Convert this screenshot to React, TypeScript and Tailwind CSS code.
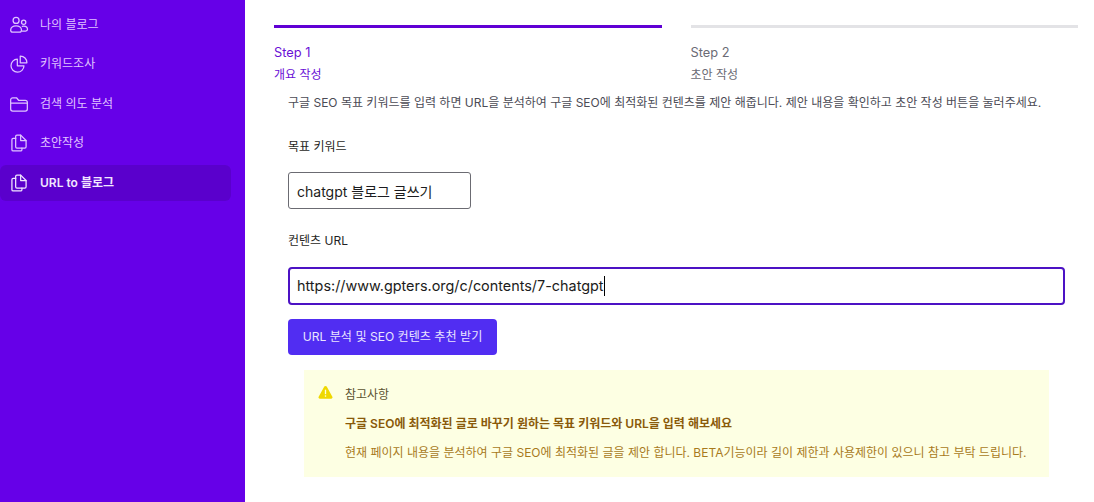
import { useState } from "react";

const font = "font-['Inter','Noto_Sans_CJK_KR',sans-serif]";

const UsersIcon = () => (
  <svg viewBox="0 0 24 24" fill="none" stroke="currentColor" strokeWidth="1.5" strokeLinecap="round" strokeLinejoin="round" className="h-5 w-5">
    <circle cx="8.500" cy="6.500" r="3.600" />
    <circle cx="17.600" cy="8.600" r="2.600" />
    <path d="M2 18.200c0-3 2.900-5.200 6.500-5.200s6.500 2.200 6.500 5.200c0 1.400-1 2.300-2.600 2.300H4.600C3 20.500 2 19.600 2 18.200Z" />
    <path d="M16 13.600c.5-.1 1-.2 1.600-.2 2.600 0 4.600 1.600 4.600 3.800 0 1.300-.9 2.100-2.300 2.100h-4" />
  </svg>
);

const PieIcon = () => (
  <svg viewBox="0 0 24 24" fill="none" stroke="currentColor" strokeWidth="1.5" strokeLinecap="round" strokeLinejoin="round" className="h-5 w-5">
    <path d="M10 6.200a7.800 7.800 0 1 0 8 8h-8v-8Z" />
    <path d="M13.500 2.500a7.800 7.800 0 0 1 8 8h-8v-8Z" />
  </svg>
);

const FolderIcon = () => (
  <svg viewBox="0 0 24 24" fill="none" stroke="currentColor" strokeWidth="1.5" strokeLinecap="round" strokeLinejoin="round" className="h-5 w-5">
    <path d="M2 7a2.500 2.500 0 0 1 2.500-2.500H9l2.500 3h8A2.500 2.500 0 0 1 22 10v8a2.500 2.500 0 0 1-2.500 2.500h-15A2.500 2.500 0 0 1 2 18V7Z" />
    <path d="M2 11h20" />
  </svg>
);

const DocsIcon = () => (
  <svg viewBox="0 0 24 24" fill="none" stroke="currentColor" strokeWidth="1.5" strokeLinecap="round" strokeLinejoin="round" className="h-5 w-5">
    <path d="M8 6.500H5a1.500 1.500 0 0 0-1.500 1.500v12A1.500 1.500 0 0 0 5 21.500h9a1.500 1.500 0 0 0 1.500-1.500v-2" />
    <path d="M8 4a1.500 1.500 0 0 1 1.500-1.500H14l6.500 6.500v7.500A1.500 1.500 0 0 1 19 18H9.500A1.500 1.500 0 0 1 8 16.500V4Z" />
    <path d="M14 2.500V9h6.500" />
  </svg>
);

const navItems = [
  { label: "나의 블로그", icon: <UsersIcon /> },
  { label: "키워드조사", icon: <PieIcon /> },
  { label: "검색 의도 분석", icon: <FolderIcon /> },
  { label: "초안작성", icon: <DocsIcon /> },
  { label: "URL to 블로그", icon: <DocsIcon />, active: true },
];

const Sidebar = () => (
  <aside className="flex w-[245px] shrink-0 flex-col gap-[3.500px] bg-[#6600e8] pt-[6.750px] pr-[14px]">
    {navItems.map((item) => (
      <div
        key={item.label}
        className={`flex h-9 items-center gap-[11px] rounded-md pl-[9px] text-[12px] ${
          item.active ? "bg-[#5a00cc] font-semibold text-[#f1e6ff]" : "font-normal text-[#e0c4ff]"
        }`}
      >
        {item.icon}
        <span>{item.label}</span>
      </div>
    ))}
  </aside>
);

const Step = ({ title, text, active }: { title: string; text: string; active?: boolean }) => (
  <div className={`flex-1 border-t-[3px] pt-[16px] ${active ? "border-[#6000d4] text-[#6a0fd6]" : "border-[#e3e3e6] text-[#6b6b75]"}`}>
    <p className="h-[18px] text-[12.800px] leading-[18px]">{title}</p>
    <p className="mt-[4px] h-[18px] text-[12px] leading-[18px]">{text}</p>
  </div>
);

export default function App() {
  const [keyword, setKeyword] = useState("chatgpt 블로그 글쓰기");
  const [url, setUrl] = useState("https://www.gpters.org/c/contents/7-chatgpt");

  return (
    <div className={`flex h-[502px] w-[1094px] overflow-hidden bg-white ${font}`}>
      <Sidebar />
      <main className="flex-1 pt-[25px] pr-[16px] pl-[29px]">
        <div className="flex gap-[29px]">
          <Step title="Step 1" text="개요 작성" active />
          <Step title="Step 2" text="초안 작성" />
        </div>

        <div className="pl-[14px]">
          <p className="mt-[10px] text-[12px] leading-[18px] whitespace-nowrap text-[#4b4b55]">
            구글 SEO 목표 키워드를 입력 하면 URL을 분석하여 구글 SEO에 최적화된 컨텐츠를 제안 해줍니다. 제안 내용을 확인하고 초안 작성 버튼을 눌러주세요.
          </p>

          <label className="mt-[26px] block text-[12px] leading-[18px] text-[#1f1f24]">목표 키워드</label>
          <input
            value={keyword}
            onChange={(e) => setKeyword(e.target.value)}
            className="mt-[16px] block h-[37px] w-[183px] rounded-[3px] border border-[#6b6b72] px-[8px] text-[14px] text-[#1c1c20] outline-none"
          />

          <label className="mt-[23px] block text-[12px] leading-[18px] text-[#1f1f24]">컨텐츠 URL</label>
          <div className="mt-[17px] flex h-[38px] w-[777px] items-center rounded-[4px] border-2 border-[#4c12c4] px-[7px] text-[14.400px] text-[#1c1c20]">
            <input
              value={url}
              onChange={(e) => setUrl(e.target.value)}
              className="bg-transparent caret-transparent outline-none field-sizing-content"
            />
            <span className="h-[20px] w-px bg-black" />
          </div>

          <button className="mt-[14px] flex h-9 w-[209px] items-center justify-center rounded-[4px] bg-[#512df2] text-[12.100px] font-normal text-[#e9e4ff]">
            URL 분석 및 SEO 컨텐츠 추천 받기
          </button>

          <div className="mt-[15px] ml-[16px] flex h-[107px] w-[745px] gap-[12px] bg-[#fdffe3] pt-[15px] pl-[14px]">
            <svg viewBox="0 0 16 16" className="h-[15px] w-[15px] shrink-0 fill-[#efd800]">
              <path d="M6.700 1.700a1.500 1.500 0 0 1 2.600 0l6 10.800a1.500 1.500 0 0 1-1.300 2.200H2a1.500 1.500 0 0 1-1.300-2.200l6-10.800Z" />
              <rect x="7.300" y="5" width="1.400" height="4.800" fill="#fdffe3" />
              <rect x="7.300" y="11" width="1.400" height="1.500" fill="#fdffe3" />
            </svg>
            <div className="pt-[1px] text-[12px] leading-[18px]">
              <p className="text-[#5b5230]">참고사항</p>
              <p className="mt-[11px] font-semibold text-[#8a5a0a]">구글 SEO에 최적화된 글로 바꾸기 원하는 목표 키워드와 URL을 입력 해보세요</p>
              <p className="mt-[11px] whitespace-nowrap text-[#a87a1c]">
                현재 페이지 내용을 분석하여 구글 SEO에 최적화된 글을 제안 합니다. BETA기능이라 길이 제한과 사용제한이 있으니 참고 부탁 드립니다.
              </p>
            </div>
          </div>
        </div>
      </main>
    </div>
  );
}
